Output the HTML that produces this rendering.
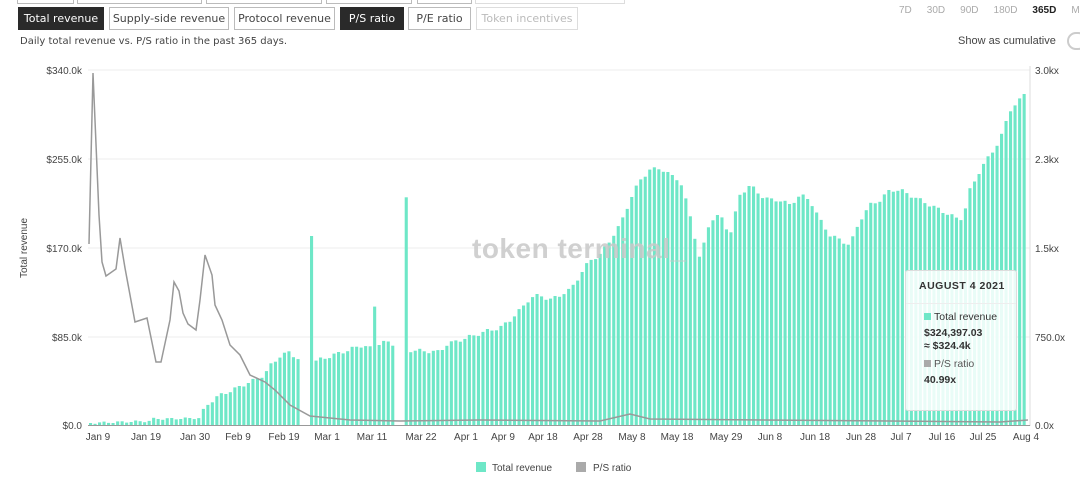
<!DOCTYPE html>
<html><head><meta charset="utf-8"><style>
*{margin:0;padding:0;box-sizing:border-box}
body{width:1080px;height:479px;background:#fff;font-family:"Liberation Sans",sans-serif;position:relative;overflow:hidden;color:#222}
.b{position:absolute;top:7px;height:23px;border:1px solid #bbb;line-height:21px;text-align:center;color:#444;font-family:"DejaVu Sans",sans-serif;font-size:11px}
.b.on{background:#2a2a2a;color:#fff;border-color:#2a2a2a}
.t{position:absolute;top:-20px;height:24px;border:1px solid #bbb}
.s{position:absolute;font-size:11px;color:#444;white-space:nowrap}
</style></head><body>
<div class="t" style="left:17px;width:57px"></div><div class="t" style="left:77px;width:125px"></div><div class="t" style="left:206px;width:116px"></div><div class="t" style="left:326px;width:86px"></div><div class="t" style="left:417px;width:55px"></div><div class="t" style="left:475px;width:150px;border-color:#ddd"></div>
<div class="b on" style="left:18px;width:86px">Total revenue</div>
<div class="b" style="left:109px;width:120px">Supply-side revenue</div>
<div class="b" style="left:234px;width:101px">Protocol revenue</div>
<div class="b on" style="left:340px;width:64px">P/S ratio</div>
<div class="b" style="left:408px;width:63px">P/E ratio</div>
<div class="b" style="left:476px;width:102px;color:#bbb;border-color:#ddd">Token incentives</div>
<div class="s" style="left:20px;top:36px;font-family:'DejaVu Sans',sans-serif;font-size:10px">Daily total revenue vs. P/S ratio in the past 365 days.</div>
<div class="s" style="left:899px;top:5px;color:#aaa;font-size:10px"><span style="margin-right:15px">7D</span><span style="margin-right:15px">30D</span><span style="margin-right:15px">90D</span><span style="margin-right:15px">180D</span><b style="color:#222;margin-right:15px">365D</b>M</div>
<div class="s" style="left:958px;top:35px">Show as cumulative</div>
<div style="position:absolute;left:1067px;top:32px;width:20px;height:18px;border:2px solid #ccc;border-radius:9px"></div>
<svg id="c" width="1080" height="479" style="position:absolute;left:0;top:0" font-family="Liberation Sans,sans-serif" font-size="10" fill="#444"></svg>
<div style="position:absolute;left:905px;top:270px;width:112px;height:141px;background:rgba(255,255,255,.85);border:1px solid #ddd;border-radius:3px;font-size:10.5px;color:#333">
<div style="padding:9px 0 0 13px;font-weight:bold;letter-spacing:.5px;height:33px;border-bottom:1px solid #eee">AUGUST 4 2021</div>
<div style="padding:7px 0 0 18px"><span style="display:inline-block;width:7px;height:7px;background:#6ee7c7;margin-right:3px"></span>Total revenue</div>
<div style="padding:4px 0 0 18px;font-weight:bold;line-height:13px">$324,397.03<br>≈ $324.4k</div>
<div style="padding:5px 0 0 18px;color:#555"><span style="display:inline-block;width:7px;height:7px;background:#aaa;margin-right:3px"></span>P/S ratio</div>
<div style="padding:4px 0 0 18px;font-weight:bold">40.99x</div>
</div>
<script>
var s=document.getElementById('c'),h='';
[70,159,248,337].forEach(function(y){h+='<line x1="88" x2="1030" y1="'+y+'" y2="'+y+'" stroke="#eee"/>'});
h+='<line x1="1030" x2="1030" y1="66" y2="426" stroke="#ddd"/>';
var L=[['$340.0k',74],['$255.0k',163],['$170.0k',252],['$85.0k',341],['$0.0',429]];
L.forEach(function(a){h+='<text x="82" y="'+a[1]+'" text-anchor="end">'+a[0]+'</text>'});
var R=[['3.0kx',74],['2.3kx',163],['1.5kx',252],['750.0x',341],['0.0x',429]];
R.forEach(function(a){h+='<text x="1035" y="'+a[1]+'">'+a[0]+'</text>'});
h+='<text transform="translate(27,248) rotate(-90)" text-anchor="middle">Total revenue</text>';
var K=[[89,423],[150,421],[155,418],[160,419],[200,418],[205,407],[215,398],[225,393],[235,389],[245,384],[255,380],[265,374],[270,366],[280,356],[290,352],[296,358],[313,362],[363,345],[376,351],[380,341],[392,344],[407,350],[440,352],[445,345],[490,330],[500,328],[510,320],[520,310],[530,298],[540,295],[550,300],[560,295],[570,290],[580,275],[590,260],[600,255],[610,240],[620,225],[630,200],[640,180],[650,170],[660,168],[670,175],[680,180],[690,215],[700,260],[710,220],[720,215],[730,235],[740,195],[750,185],[760,195],[770,200],[780,200],[790,205],[800,195],[810,200],[820,220],[830,235],[840,240],[850,245],[860,220],[870,205],[880,200],[890,190],[900,190],[910,195],[920,200],[930,205],[940,210],[950,215],[960,220],[965,210],[970,190],[980,170],[990,155],[1000,140],[1010,110],[1020,100],[1028,88]];
function f(x){for(var i=1;i<K.length;i++)if(x<=K[i][0]){var a=K[i-1],b=K[i];return a[1]+(b[1]-a[1])*(x-a[0])/(b[0]-a[0]);}return 88;}
for(var i=0;i<208;i++){var x=89+i*4.51;if((x>298&&x<308)||(x>394&&x<401))continue;var y=f(x+1.5);
if(Math.abs(x-309)<2.3)y=234;if(Math.abs(x-372)<2.3)y=306;if(Math.abs(x-403)<2.3)y=198;
y+=Math.sin(i*1.7)*(y>415?1:2);if(y>424)y=424;h+='<rect x="'+x.toFixed(1)+'" y="'+y.toFixed(1)+'" width="3.1" height="'+(425-y).toFixed(1)+'" fill="#6ee7c7"/>';}
var P=[[89,244],[93,73],[99,215],[102,262],[106,276],[116,269],[120,238],[125,268],[135,322],[147,318],[156,362],[161,362],[170,320],[174,282],[179,291],[183,313],[188,324],[196,330],[200,300],[205,255],[212,275],[215,305],[222,320],[230,345],[240,355],[250,375],[265,382],[275,390],[290,405],[310,416],[350,420],[400,421],[480,420],[600,421],[630,414],[650,419],[1000,422],[1028,420]];
h+='<polyline fill="none" stroke="#999" stroke-width="1.5" points="'+P.map(function(p){return p.join(',')}).join(' ')+'"/>';
h+='<line x1="88" x2="1030" y1="425.5" y2="425.5" stroke="#999"/>';
var D=[['Jan 9',98],['Jan 19',146],['Jan 30',195],['Feb 9',238],['Feb 19',284],['Mar 1',327],['Mar 11',372],['Mar 22',421],['Apr 1',466],['Apr 9',503],['Apr 18',543],['Apr 28',588],['May 8',632],['May 18',677],['May 29',726],['Jun 8',770],['Jun 18',815],['Jun 28',861],['Jul 7',901],['Jul 16',942],['Jul 25',983],['Aug 4',1026]];
D.forEach(function(a){h+='<text x="'+a[1]+'" y="440" text-anchor="middle">'+a[0]+'</text>'});
h+='<rect x="476" y="462" width="10" height="10" fill="#6ee7c7"/><text x="492" y="471">Total revenue</text><rect x="576" y="462" width="10" height="10" fill="#aaa"/><text x="593" y="471">P/S ratio</text>';
h+='<text x="472" y="258" font-size="28" fill="#c8c8c8" fill-opacity=".85" font-weight="bold" letter-spacing="0.5">token terminal_</text>';
s.innerHTML=h;
</script>
</body></html>
